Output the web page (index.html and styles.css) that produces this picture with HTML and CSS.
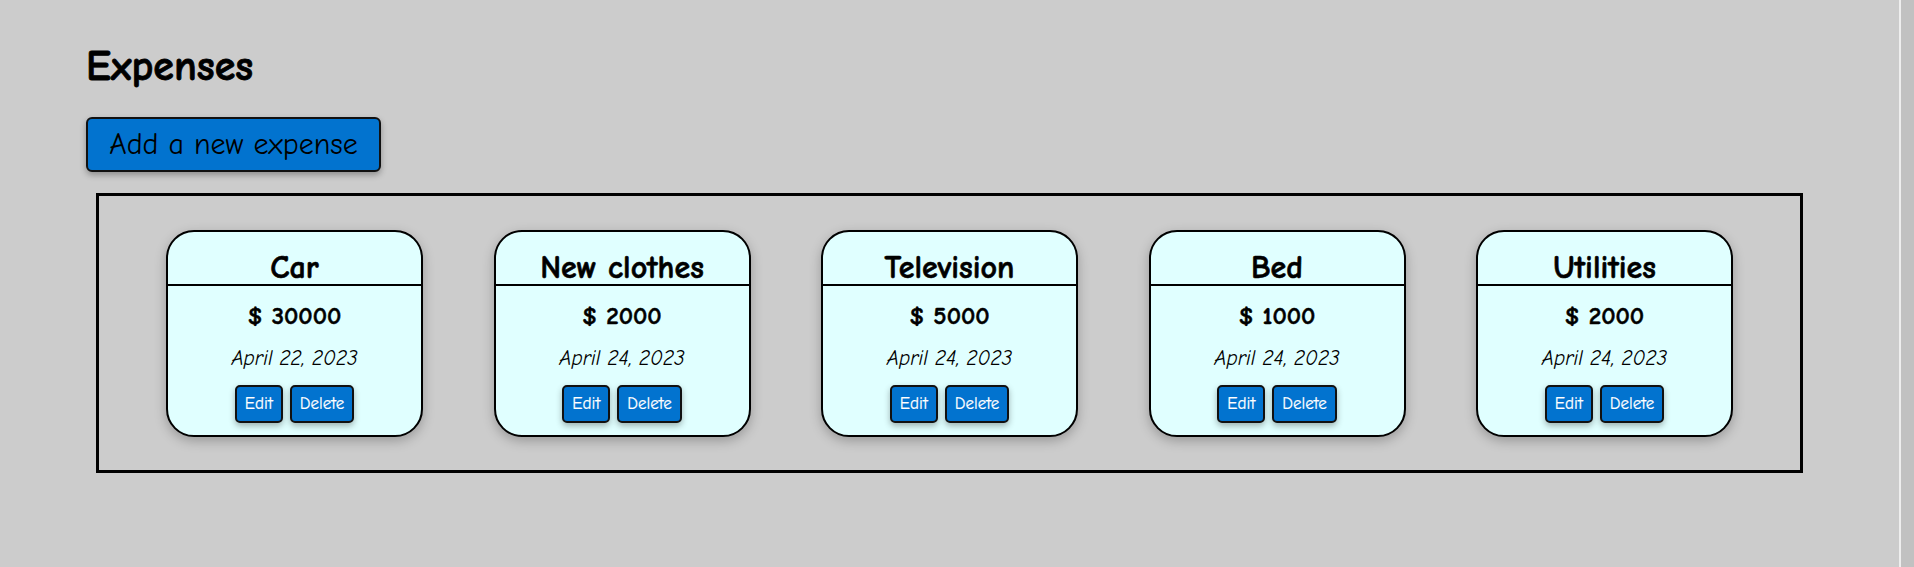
FILE: index.html
```html
<!DOCTYPE html>
<html>
<head>
<meta charset="utf-8">
<title>Expenses</title>
<link rel="stylesheet" href="styles.css">
</head>
<body>
<div class="page">
  <main class="main">
    <h1 class="title">Expenses</h1>
    <button class="add-btn">Add a new expense</button>
    <section class="board">
      <div class="card">
        <div class="card-title">Car</div>
        <div class="amount">$ 30000</div>
        <div class="date">April 22, 2023</div>
        <div class="actions"><button class="btn">Edit</button><button class="btn">Delete</button></div>
      </div>
      <div class="card">
        <div class="card-title">New clothes</div>
        <div class="amount">$ 2000</div>
        <div class="date">April 24, 2023</div>
        <div class="actions"><button class="btn">Edit</button><button class="btn">Delete</button></div>
      </div>
      <div class="card">
        <div class="card-title">Television</div>
        <div class="amount">$ 5000</div>
        <div class="date">April 24, 2023</div>
        <div class="actions"><button class="btn">Edit</button><button class="btn">Delete</button></div>
      </div>
      <div class="card">
        <div class="card-title">Bed</div>
        <div class="amount">$ 1000</div>
        <div class="date">April 24, 2023</div>
        <div class="actions"><button class="btn">Edit</button><button class="btn">Delete</button></div>
      </div>
      <div class="card">
        <div class="card-title">Utilities</div>
        <div class="amount">$ 2000</div>
        <div class="date">April 24, 2023</div>
        <div class="actions"><button class="btn">Edit</button><button class="btn">Delete</button></div>
      </div>
    </section>
  </main>
  <div class="edge-line"></div>
  <div class="edge"></div>
</div>
</body>
</html>
```
FILE: styles.css
```css
html, body {
  margin: 0;
  padding: 0;
  height: 100%;
}
body {
  background: #cccccc;
  font-family: "Comic Sans MS", "Comic Neue", "DejaVu Sans", sans-serif;
  color: #000;
}
.page {
  display: flex;
  min-height: 567px;
}
.main {
  flex: 1;
  padding: 41px 86px 0 86px;
  display: flex;
  flex-direction: column;
  align-items: flex-start;
}
.edge-line {
  width: 2px;
  background: #eeeeee;
}
.edge {
  width: 13px;
  background: #c1c1c1;
}
.title {
  margin: 0;
  font-size: 42px;
  line-height: 52px;
  font-weight: 900;
  -webkit-text-stroke: 0.8px #000;
}
.add-btn {
  margin-top: 24px;
  width: 295px;
  height: 55px;
  background: #0273cf;
  border: 2px solid #111;
  border-radius: 6px;
  font-family: inherit;
  font-size: 30px;
  color: #000;
  box-shadow: 0 3px 6px rgba(0,0,0,0.3);
  padding: 0;
}
.board {
  align-self: stretch;
  margin: 21px 10px 0 10px;
  padding: 0 67px;
  border: 3px solid #000;
  height: 280px;
  box-sizing: border-box;
  display: flex;
  justify-content: space-between;
  align-items: center;
}
.card {
  width: 257px;
  height: 207px;
  box-sizing: border-box;
  border: 2px solid #000;
  border-radius: 28px;
  background: #e0ffff;
  box-shadow: 0 4px 12px rgba(0,0,0,0.25);
  overflow: hidden;
  display: flex;
  flex-direction: column;
  align-items: center;
}
.card-title {
  align-self: stretch;
  height: 54px;
  box-sizing: border-box;
  border-bottom: 2px solid #000;
  text-align: center;
  font-size: 32px;
  font-weight: 900;
  -webkit-text-stroke: 0.6px #000;
  line-height: 71px;
}
.amount {
  margin-top: 17px;
  font-size: 25px;
  font-weight: 900;
  -webkit-text-stroke: 0.5px #000;
  line-height: 26px;
}
.date {
  margin-top: 17px;
  font-size: 21px;
  font-style: italic;
  line-height: 24px;
}
.actions {
  margin-top: 15px;
  display: flex;
  gap: 7px;
}
.btn {
  height: 38px;
  padding: 0 8px;
  background: #0273cf;
  border: 2px solid #111;
  border-radius: 5px;
  color: #fff;
  font-family: inherit;
  font-size: 17px;
  -webkit-text-stroke: 0.2px #fff;
  box-shadow: 0 3px 6px rgba(0,0,0,0.3);
}
```
